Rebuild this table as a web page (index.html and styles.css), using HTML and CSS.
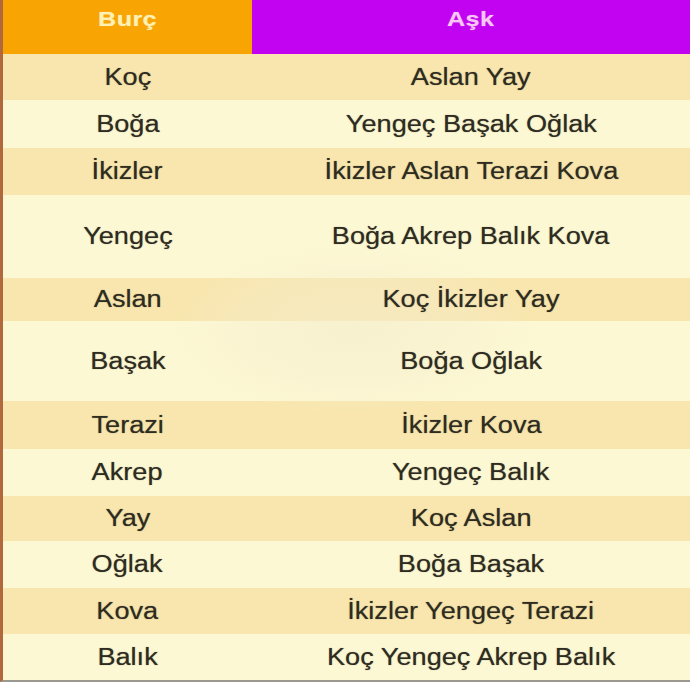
FILE: index.html
```html
<!DOCTYPE html>
<html lang="tr">
<head>
<meta charset="utf-8">
<title>Burç - Aşk</title>
<link rel="stylesheet" href="styles.css">
</head>
<body>
<div class="page">
  <div class="table">
    <div class="row head">
      <div class="cell burc"><span class="txt">Burç</span></div>
      <div class="cell ask"><span class="txt">Aşk</span></div>
    </div>
    <div class="row dark"><div class="cell"><span class="txt">Koç</span></div><div class="cell"><span class="txt">Aslan Yay</span></div></div>
    <div class="row light"><div class="cell"><span class="txt">Boğa</span></div><div class="cell"><span class="txt">Yengeç Başak Oğlak</span></div></div>
    <div class="row dark"><div class="cell"><span class="txt">İkizler</span></div><div class="cell"><span class="txt">İkizler Aslan Terazi Kova</span></div></div>
    <div class="row light"><div class="cell"><span class="txt">Yengeç</span></div><div class="cell"><span class="txt">Boğa Akrep Balık Kova</span></div></div>
    <div class="row dark"><div class="cell"><span class="txt">Aslan</span></div><div class="cell"><span class="txt">Koç İkizler Yay</span></div></div>
    <div class="row light"><div class="cell"><span class="txt">Başak</span></div><div class="cell"><span class="txt">Boğa Oğlak</span></div></div>
    <div class="row dark"><div class="cell"><span class="txt">Terazi</span></div><div class="cell"><span class="txt">İkizler Kova</span></div></div>
    <div class="row light"><div class="cell"><span class="txt">Akrep</span></div><div class="cell"><span class="txt">Yengeç Balık</span></div></div>
    <div class="row dark"><div class="cell"><span class="txt">Yay</span></div><div class="cell"><span class="txt">Koç Aslan</span></div></div>
    <div class="row light"><div class="cell"><span class="txt">Oğlak</span></div><div class="cell"><span class="txt">Boğa Başak</span></div></div>
    <div class="row dark"><div class="cell"><span class="txt">Kova</span></div><div class="cell"><span class="txt">İkizler Yengeç Terazi</span></div></div>
    <div class="row light"><div class="cell"><span class="txt">Balık</span></div><div class="cell"><span class="txt">Koç Yengeç Akrep Balık</span></div></div>
    <div class="smudge"></div>
  </div>
</div>
</body>
</html>
```
FILE: styles.css
```css
html, body {
  margin: 0;
  padding: 0;
  background: #ffffff;
}

.page {
  width: 690px;
  height: 690px;
  background: #ffffff;
  overflow: hidden;
}

.table {
  position: relative;
  display: grid;
  grid-template-rows: 54px 46px 48px 47px 83px 43px 80px 48px 47px 45px 47px 46px 46px;
  border-left: 3px solid #b0683c;
  border-bottom: 2px solid #9a9890;
  font-family: "Liberation Sans", Arial, sans-serif;
  color: #2e2b1f;
  overflow: hidden;
}

.row {
  display: grid;
  grid-template-columns: 249px 1fr;
  align-items: center;
}

.cell {
  display: flex;
  justify-content: center;
  align-items: center;
  height: 100%;
}

.txt {
  position: relative;
  z-index: 1;
  display: inline-block;
  font-size: 23px;
  transform: scaleX(1.18);
  white-space: nowrap;
  text-shadow: 0 0 1px rgba(46, 43, 31, 0.55);
}

.dark { background: #f9e6ae; }
.light { background: #fdf8d4; }

.head .cell {
  align-items: flex-start;
  padding-top: 7px;
  box-sizing: border-box;
}

.head .txt {
  font-size: 21px;
  font-weight: bold;
  letter-spacing: 0.3px;
  transform: scaleX(1.2);
  text-shadow: 0 0 1px rgba(255, 255, 255, 0.4);
}

.burc {
  background: #f8a504;
  color: #fff1b4;
}

.ask {
  background: #c203f1;
  color: #f7c6f3;
}

.smudge {
  position: absolute;
  z-index: 0;
  left: 170px;
  top: 245px;
  width: 360px;
  height: 170px;
  border-radius: 50%;
  background: radial-gradient(ellipse at center, rgba(243, 236, 204, 0.6) 0%, rgba(243, 236, 204, 0.35) 45%, rgba(243, 236, 204, 0) 72%);
  pointer-events: none;
}
```
